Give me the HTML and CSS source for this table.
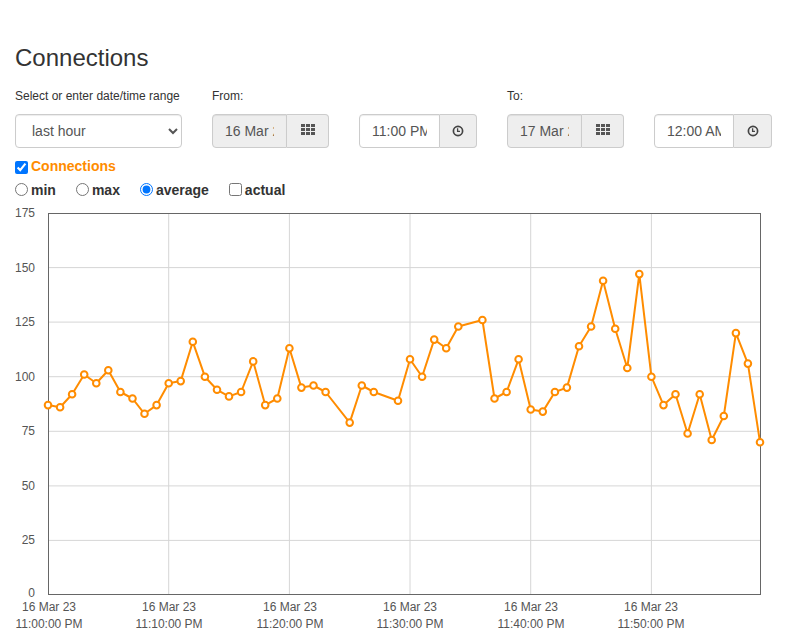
FILE: index.html
```html
<!DOCTYPE html>
<html lang="en">
<head>
<meta charset="utf-8">
<title>Connections</title>
<link rel="stylesheet" href="styles.css">
</head>
<body>
<div class="page">
  <h1 class="title">Connections</h1>
  <div class="controls">
    <div class="field">
      <label class="lbl">Select or enter date/time range</label>
      <select class="ctl select"><option>last hour</option></select>
    </div>
    <div class="field">
      <label class="lbl">From:</label>
      <div class="group">
        <input class="ctl date" value="16 Mar 23" readonly>
        <span class="addon addon-cal"><svg class="ico-grid" width="14" height="11" viewBox="0 0 14 11"><g fill="#555"><rect x="0" y="0" width="4" height="3"/><rect x="5" y="0" width="4" height="3"/><rect x="10" y="0" width="4" height="3"/><rect x="0" y="4" width="4" height="3"/><rect x="5" y="4" width="4" height="3"/><rect x="10" y="4" width="4" height="3"/><rect x="0" y="8" width="4" height="3"/><rect x="5" y="8" width="4" height="3"/><rect x="10" y="8" width="4" height="3"/></g></svg></span>
      </div>
    </div>
    <div class="field">
      <span class="lbl"></span>
      <div class="group">
        <input class="ctl time" value="11:00 PM">
        <span class="addon addon-clock"><svg width="12" height="12" viewBox="0 0 12 12"><circle cx="6" cy="6" r="4.6" fill="none" stroke="#444" stroke-width="1.7"/><path d="M5.6 3.2V6.4H8" fill="none" stroke="#444" stroke-width="1.3"/></svg></span>
      </div>
    </div>
    <div class="field">
      <label class="lbl">To:</label>
      <div class="group">
        <input class="ctl date" value="17 Mar 23" readonly>
        <span class="addon addon-cal"><svg class="ico-grid" width="14" height="11" viewBox="0 0 14 11"><g fill="#555"><rect x="0" y="0" width="4" height="3"/><rect x="5" y="0" width="4" height="3"/><rect x="10" y="0" width="4" height="3"/><rect x="0" y="4" width="4" height="3"/><rect x="5" y="4" width="4" height="3"/><rect x="10" y="4" width="4" height="3"/><rect x="0" y="8" width="4" height="3"/><rect x="5" y="8" width="4" height="3"/><rect x="10" y="8" width="4" height="3"/></g></svg></span>
      </div>
    </div>
    <div class="field">
      <span class="lbl"></span>
      <div class="group">
        <input class="ctl time time-to" value="12:00 AM">
        <span class="addon addon-clock addon-clock-to"><svg width="12" height="12" viewBox="0 0 12 12"><circle cx="6" cy="6" r="4.6" fill="none" stroke="#444" stroke-width="1.7"/><path d="M5.6 3.2V6.4H8" fill="none" stroke="#444" stroke-width="1.3"/></svg></span>
      </div>
    </div>
  </div>
  <div class="series">
    <label class="series-lbl"><input class="chk" type="checkbox" checked>Connections</label>
  </div>
  <div class="modes">
    <label class="mode"><input class="rad" type="radio" name="mode">min</label>
    <label class="mode"><input class="rad" type="radio" name="mode">max</label>
    <label class="mode"><input class="rad" type="radio" name="mode" checked>average</label>
    <label class="mode"><input class="rad" type="checkbox">actual</label>
  </div>
</div>
<div class="chart">
  <svg class="chart-svg" width="787" height="434" viewBox="0 200 787 434">
    <defs>
      <marker id="dot" markerUnits="userSpaceOnUse" markerWidth="10" markerHeight="10" refX="5" refY="5" viewBox="0 0 10 10">
        <circle cx="5" cy="5" r="3.3" fill="#fff" stroke="#ff8c00" stroke-width="2"/>
      </marker>
    </defs>
    <g stroke="#d6d6d6" stroke-width="1">
      <line x1="48" y1="267.6" x2="760" y2="267.6"/>
      <line x1="48" y1="322.1" x2="760" y2="322.1"/>
      <line x1="48" y1="376.7" x2="760" y2="376.7"/>
      <line x1="48" y1="431.3" x2="760" y2="431.3"/>
      <line x1="48" y1="485.9" x2="760" y2="485.9"/>
      <line x1="48" y1="540.4" x2="760" y2="540.4"/>
      <line x1="168.7" y1="213" x2="168.7" y2="595"/>
      <line x1="289.4" y1="213" x2="289.4" y2="595"/>
      <line x1="410" y1="213" x2="410" y2="595"/>
      <line x1="530.7" y1="213" x2="530.7" y2="595"/>
      <line x1="651.4" y1="213" x2="651.4" y2="595"/>
    </g>
    <rect x="48.5" y="213.5" width="712" height="381" fill="none" stroke="#666" stroke-width="1"/>
    <g class="ylab" text-anchor="end">
      <text x="35" y="217">175</text>
      <text x="35" y="271.6">150</text>
      <text x="35" y="326.1">125</text>
      <text x="35" y="380.7">100</text>
      <text x="35" y="435.3">75</text>
      <text x="35" y="489.9">50</text>
      <text x="35" y="544.4">25</text>
      <text x="35" y="597">0</text>
    </g>
    <g class="xlab" text-anchor="middle">
      <text x="49" y="611">16 Mar 23</text><text x="49" y="628">11:00:00 PM</text>
      <text x="169" y="611">16 Mar 23</text><text x="169" y="628">11:10:00 PM</text>
      <text x="290" y="611">16 Mar 23</text><text x="290" y="628">11:20:00 PM</text>
      <text x="410" y="611">16 Mar 23</text><text x="410" y="628">11:30:00 PM</text>
      <text x="531" y="611">16 Mar 23</text><text x="531" y="628">11:40:00 PM</text>
      <text x="651" y="611">16 Mar 23</text><text x="651" y="628">11:50:00 PM</text>
    </g>
    <polyline fill="none" stroke="#ff8c00" stroke-width="2" stroke-linejoin="round" marker-start="url(#dot)" marker-mid="url(#dot)" marker-end="url(#dot)"
      points="48,405.1 60.1,407.3 72.1,394.2 84.2,374.5 96.3,383.3 108.3,370.2 120.4,392.0 132.5,398.5 144.5,413.8 156.6,405.1 168.7,383.3 180.7,381.1 192.8,341.8 204.9,376.7 217.0,389.8 229.0,396.4 241.1,392.0 253.2,361.4 265.2,405.1 277.3,398.5 289.4,348.3 301.4,387.6 313.5,385.5 325.6,392.0 349.7,422.6 361.8,385.5 373.8,392.0 398.0,400.7 410.0,359.3 422.1,376.7 434.2,339.6 446.2,348.3 458.3,326.5 482.4,320.0 494.5,398.5 506.6,392.0 518.6,359.3 530.7,409.5 542.8,411.6 554.9,392.0 566.9,387.6 579.0,346.2 591.1,326.5 603.1,280.7 615.2,328.7 627.3,368.0 639.3,274.1 651.4,376.7 663.5,405.1 675.5,394.2 687.6,433.5 699.7,394.2 711.7,440.0 723.8,416.0 735.9,333.1 747.9,363.6 760,442.2"/>
  </svg>
</div>
</body>
</html>
```

FILE: styles.css
```css
* { box-sizing: border-box; }
body {
  margin: 0;
  font-family: "Liberation Sans", Arial, sans-serif;
  color: #333;
  background: #fff;
}
.page { padding: 0 15px; }
.title {
  margin: 45px 0 0;
  font-size: 24px;
  line-height: 26px;
  font-weight: normal;
  color: #333;
}
.controls {
  display: flex;
  gap: 30px;
  margin-top: 17px;
}
.lbl {
  display: block;
  font-size: 12px;
  line-height: 17px;
  height: 17px;
  margin-bottom: 9px;
  color: #333;
}
.ctl {
  height: 34px;
  padding: 6px 12px;
  font-family: "Liberation Sans", Arial, sans-serif;
  font-size: 14px;
  color: #555;
  background: #fff;
  border: 1px solid #ccc;
  box-shadow: inset 0 1px 1px rgba(0,0,0,.075);
  outline: none;
}
.select {
  width: 167px;
  border-radius: 4px;
}
.group { display: flex; }
.date {
  width: 75px;
  background: #eee;
  border-radius: 4px 0 0 4px;
}
.time {
  width: 81px;
  border-radius: 4px 0 0 4px;
}
.time-to { width: 80px; }
.addon {
  display: flex;
  align-items: center;
  justify-content: center;
  height: 34px;
  background: #eee;
  border: 1px solid #ccc;
  border-left: 0;
  border-radius: 0 4px 4px 0;
}
.addon-cal { width: 42px; padding-bottom: 4px; }
.addon-clock { width: 37px; }
.addon-clock-to { width: 38px; }
.addon svg { display: block; }
.series {
  margin-top: 8px;
  height: 20px;
  display: flex;
  align-items: center;
}
.series-lbl {
  display: flex;
  align-items: center;
  font-size: 14px;
  font-weight: bold;
  color: #ff8c00;
}
.chk { margin: 3px 3px 0 0; }
.modes {
  margin-top: 4px;
  height: 20px;
  display: flex;
  align-items: center;
}
.mode {
  display: flex;
  align-items: center;
  font-size: 14px;
  font-weight: bold;
  color: #333;
  margin-right: 20px;
}
.rad { margin: 0 3px 2px 0; }
.chart { line-height: 0; }
.chart-svg { display: block; }
.ylab text, .xlab text {
  font-family: "Liberation Sans", Arial, sans-serif;
  font-size: 12px;
  fill: #555;
}
```
